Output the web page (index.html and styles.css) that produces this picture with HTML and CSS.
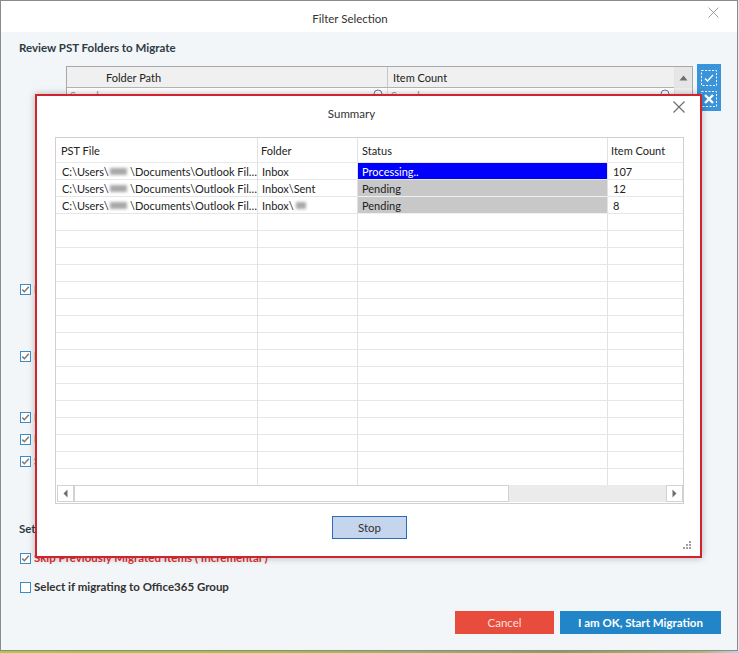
FILE: index.html
```html
<!DOCTYPE html>
<html lang="en">
<head>
<meta charset="utf-8">
<title>Filter Selection</title>
<link rel="stylesheet" href="styles.css">
</head>
<body>
<div class="desk">
  <div class="window">
    <div class="titlebar">
      <span></span>
      <span class="title">Filter Selection</span>
      <svg class="win-close" width="11" height="11" viewBox="0 0 11 11"><path d="M0.5 0.5L10.5 10.5M10.5 0.5L0.5 10.5" stroke="#a0a0a0" stroke-width="1"/></svg>
    </div>
    <div class="main">
      <h2 class="heading">Review PST Folders to Migrate</h2>
      <div class="folders">
        <div class="fgrid">
          <div class="ftable">
            <div class="frow fhead">
              <div class="fcell fc1">Folder Path</div>
              <div class="fcell fc2">Item Count</div>
            </div>
            <div class="frow fsearch">
              <div class="fcell fc1"><span class="ph">Search</span><svg class="mag" width="10" height="10" viewBox="0 0 10 10"><circle cx="5" cy="5" r="4" fill="none" stroke="#5b7ea6" stroke-width="1"/></svg></div>
              <div class="fcell fc2"><span class="ph">Search</span><svg class="mag" width="10" height="10" viewBox="0 0 10 10"><circle cx="5" cy="5" r="4" fill="none" stroke="#5b7ea6" stroke-width="1"/></svg></div>
            </div>
          </div>
          <div class="vscroll">
            <div class="vbtn"><svg width="9" height="6" viewBox="0 0 9 6"><path d="M4.5 0.5L8.5 5.5H0.5Z" fill="#6e6e6e"/></svg></div>
          </div>
        </div>
        <div class="side-btns">
          <div class="side-btn"><svg width="16" height="16" viewBox="0 0 16 16"><rect x="0.5" y="0.5" width="15" height="15" fill="none" stroke="#fff" stroke-dasharray="2 1.5"/><path d="M4 8.5L6.5 11L12 5" fill="none" stroke="#fff" stroke-width="1.3"/></svg></div>
          <div class="side-btn"><svg width="16" height="16" viewBox="0 0 16 16"><rect x="0.5" y="0.5" width="15" height="15" fill="none" stroke="#fff" stroke-dasharray="2 1.5"/><path d="M4 4L12 12M12 4L4 12" fill="none" stroke="#fff" stroke-width="2.4"/></svg></div>
        </div>
      </div>
      <div class="filters">
        <div class="opt opt-1"><span class="cb"><svg width="9" height="9" viewBox="0 0 9 9"><path d="M1.3 4.6L3.4 6.7L7.8 1.8" fill="none" stroke="#7a7a7a" stroke-width="1.5"/></svg></span><span class="opt-label">Date Filter</span></div>
        <div class="opt opt-2"><span class="cb"><svg width="9" height="9" viewBox="0 0 9 9"><path d="M1.3 4.6L3.4 6.7L7.8 1.8" fill="none" stroke="#7a7a7a" stroke-width="1.5"/></svg></span><span class="opt-label">Item Type Filter</span></div>
        <div class="opt opt-3"><span class="cb"><svg width="9" height="9" viewBox="0 0 9 9"><path d="M1.3 4.6L3.4 6.7L7.8 1.8" fill="none" stroke="#7a7a7a" stroke-width="1.5"/></svg></span><span class="opt-label">Exclude Deleted Items</span></div>
        <div class="opt opt-4"><span class="cb"><svg width="9" height="9" viewBox="0 0 9 9"><path d="M1.3 4.6L3.4 6.7L7.8 1.8" fill="none" stroke="#7a7a7a" stroke-width="1.5"/></svg></span><span class="opt-label">Exclude Empty Folders</span></div>
        <div class="opt opt-5"><span class="cb"><svg width="9" height="9" viewBox="0 0 9 9"><path d="M1.3 4.6L3.4 6.7L7.8 1.8" fill="none" stroke="#7a7a7a" stroke-width="1.5"/></svg></span><span class="opt-label">Save Folder Structure</span></div>
      </div>
      <h2 class="heading settings-head">Settings</h2>
      <div class="opt opt-skip"><span class="cb"><svg width="9" height="9" viewBox="0 0 9 9"><path d="M1.3 4.6L3.4 6.7L7.8 1.8" fill="none" stroke="#7a7a7a" stroke-width="1.5"/></svg></span><span class="opt-label red">Skip Previously Migrated Items ( Incremental )</span></div>
      <div class="opt opt-group"><span class="cb"></span><span class="opt-label">Select if migrating to Office365 Group</span></div>
      <div class="actions">
        <button class="btn btn-cancel">Cancel</button>
        <button class="btn btn-start">I am OK, Start Migration</button>
      </div>
    </div>
  </div>
  <div class="strip"></div>

  <div class="summary">
    <div class="sum-title">
      <span></span>
      <span class="sum-name">Summary</span>
      <svg class="sum-close" width="12" height="12" viewBox="0 0 12 12"><path d="M0.5 0.5L11.5 11.5M11.5 0.5L0.5 11.5" stroke="#6b6b6b" stroke-width="1.1"/></svg>
    </div>
    <div class="sgrid">
      <div class="stable">
        <div class="sh">PST File</div><div class="sh">Folder</div><div class="sh">Status</div><div class="sh">Item Count</div>

        <div class="sc">C:\Users\<span class="blur"></span>\Documents\Outlook Fil…</div><div class="sc">Inbox</div><div class="sc st-proc">Processing..</div><div class="sc num">107</div>
        <div class="sc">C:\Users\<span class="blur"></span>\Documents\Outlook Fil…</div><div class="sc">Inbox\Sent</div><div class="sc st-pend">Pending</div><div class="sc num">12</div>
        <div class="sc">C:\Users\<span class="blur"></span>\Documents\Outlook Fil…</div><div class="sc">Inbox\<span class="blur short"></span></div><div class="sc st-pend">Pending</div><div class="sc num">8</div>

        <div class="sc"></div><div class="sc"></div><div class="sc"></div><div class="sc"></div>
        <div class="sc"></div><div class="sc"></div><div class="sc"></div><div class="sc"></div>
        <div class="sc"></div><div class="sc"></div><div class="sc"></div><div class="sc"></div>
        <div class="sc"></div><div class="sc"></div><div class="sc"></div><div class="sc"></div>
        <div class="sc"></div><div class="sc"></div><div class="sc"></div><div class="sc"></div>
        <div class="sc"></div><div class="sc"></div><div class="sc"></div><div class="sc"></div>
        <div class="sc"></div><div class="sc"></div><div class="sc"></div><div class="sc"></div>
        <div class="sc"></div><div class="sc"></div><div class="sc"></div><div class="sc"></div>
        <div class="sc"></div><div class="sc"></div><div class="sc"></div><div class="sc"></div>
        <div class="sc"></div><div class="sc"></div><div class="sc"></div><div class="sc"></div>
        <div class="sc"></div><div class="sc"></div><div class="sc"></div><div class="sc"></div>
        <div class="sc"></div><div class="sc"></div><div class="sc"></div><div class="sc"></div>
        <div class="sc"></div><div class="sc"></div><div class="sc"></div><div class="sc"></div>
        <div class="sc"></div><div class="sc"></div><div class="sc"></div><div class="sc"></div>
        <div class="sc"></div><div class="sc"></div><div class="sc"></div><div class="sc"></div>
        <div class="sc"></div><div class="sc"></div><div class="sc"></div><div class="sc"></div>
      </div>
      <div class="hscroll">
        <div class="hbtn"><svg width="5" height="9" viewBox="0 0 5 9"><path d="M4.5 0.5V8.5L0.5 4.5Z" fill="#6e6e6e"/></svg></div>
        <div class="hthumb"></div>
        <div class="htrack"></div>
        <div class="hbtn"><svg width="5" height="9" viewBox="0 0 5 9"><path d="M0.5 0.5V8.5L4.5 4.5Z" fill="#6e6e6e"/></svg></div>
      </div>
    </div>
    <div class="sum-foot">
      <span></span>
      <button class="stop">Stop</button>
      <svg class="grip" width="9" height="8" viewBox="0 0 9 8"><rect x="6" y="0" width="2" height="2" fill="#a0a0a0"/><rect x="3" y="3" width="2" height="2" fill="#a0a0a0"/><rect x="6" y="3" width="2" height="2" fill="#a0a0a0"/><rect x="0" y="6" width="2" height="2" fill="#a0a0a0"/><rect x="3" y="6" width="2" height="2" fill="#a0a0a0"/><rect x="6" y="6" width="2" height="2" fill="#a0a0a0"/></svg>
    </div>
  </div>
</div>
</body>
</html>
```

FILE: styles.css
```css
* { box-sizing: border-box; }
html, body { margin: 0; padding: 0; }
body {
  width: 739px;
  height: 653px;
  overflow: hidden;
  font-family: Lato, "Noto Sans", sans-serif;
  font-size: 11px;
  color: #333;
  background: #e6e9ec;
}
.desk {
  position: relative;
  width: 739px;
  height: 653px;
  display: flex;
  flex-direction: column;
}
.window {
  width: 738px;
  height: 651px;
  border: 1px solid #8b8b8b;
  background: #f3f6f8;
  display: flex;
  flex-direction: column;
}
.strip {
  width: 739px;
  height: 2px;
  background: linear-gradient(90deg, #b3c83a 0, #a8c03b 280px, #9fb45c 400px, #8aa24c 560px, #a7b872 700px, #c5d0e2 739px);
}
.titlebar {
  height: 31px;
  background: #fff;
  display: grid;
  grid-template-columns: 1fr auto 1fr;
  align-items: start;
  padding-top: 11px;
}
.title { font-size: 11.5px; line-height: 14px; color: #333; margin-right: 38px; }
.win-close { justify-self: end; margin-right: 18px; margin-top: -5px; }

.main {
  flex: 1;
  padding: 8px 16px 0 18px;
  display: flex;
  flex-direction: column;
}
.heading {
  margin: 0;
  font-size: 11.5px;
  font-weight: 700;
  line-height: 16px;
  color: #2e3a44;
}
.folders {
  margin-top: 10px;
  margin-left: 47px;
  display: flex;
  align-items: flex-start;
  gap: 4px;
}
.fgrid {
  width: 627px;
  height: 205px;
  border: 1px solid #a8a8a8;
  background: #fff;
  display: flex;
}
.ftable { flex: 1; display: flex; flex-direction: column; }
.frow { display: grid; grid-template-columns: 321px 1fr; }
.fhead { height: 21px; background: #f0f0f0; border-bottom: 1px solid #b5b5b5; }
.fsearch { height: 21px; border-bottom: 1px solid #e0e0e0; }
.fcell { display: flex; align-items: center; }
.fhead .fc1 { padding-left: 39px; border-right: 1px solid #c8c8c8; color: #222; }
.fhead .fc2 { padding-left: 5px; color: #222; }
.fsearch .fcell { justify-content: space-between; align-items: flex-start; padding: 1px 4px 0 3px; }
.fsearch .fc1 { border-right: 1px solid #e0e0e0; }
.ph { color: #999; line-height: 13px; }
.mag { margin-top: 0; }
.vscroll { width: 18px; background: #f0f0f0; border-left: 1px solid #e3e3e3; }
.vbtn { height: 21px; background: #e6e6e6; display: flex; align-items: center; justify-content: center; }
.side-btns {
  margin-top: -2px;
  width: 24px;
  background: #3a94d9;
  display: flex;
  flex-direction: column;
  padding: 3px 0 2px;
}
.side-btn { height: 21px; display: flex; align-items: center; justify-content: center; }

.opt { display: flex; align-items: flex-start; gap: 3px; height: 16px; line-height: 16px; }
.cb {
  width: 11px;
  height: 11px;
  margin: 3px 0 0 1px;
  border: 1px solid #3a8dcd;
  background: #fff;
  display: flex;
  align-items: center;
  justify-content: center;
  flex: none;
}
.opt-label { font-weight: 700; font-size: 11.5px; color: #333; white-space: nowrap; }
.opt-label.red { color: #e0302e; }
.opt-1 { margin-top: 10px; }
.opt-2 { margin-top: 51px; }
.opt-3 { margin-top: 45px; }
.opt-4 { margin-top: 6px; }
.opt-5 { margin-top: 6px; }
.settings-head { margin-top: 52px; }
.opt-skip { margin-top: 13px; }
.opt-group { margin-top: 13px; }
.actions { margin-top: 16px; display: flex; justify-content: flex-end; gap: 6px; }
.btn {
  height: 23px;
  border: 0;
  font-family: inherit;
  font-size: 11.5px;
  padding: 0;
  color: #fff;
}
.btn-cancel { width: 99px; background: #e74c3c; color: #fbe0dc; }
.btn-start { width: 161px; background: #2185c7; font-weight: 700; }

/* summary dialog */
.summary {
  position: absolute;
  left: 35px;
  top: 94px;
  width: 667px;
  height: 464px;
  border: 2px solid #d1232f;
  background: #fff;
  box-shadow: 0 0 7px rgba(0, 0, 0, 0.28);
  display: flex;
  flex-direction: column;
  padding: 0 16px 0 18px;
}
.sum-title {
  height: 41px;
  display: grid;
  grid-template-columns: 1fr auto 1fr;
  align-items: start;
}
.sum-name { margin-top: 11px; margin-right: 36px; line-height: 14px; font-size: 11.5px; color: #333; }
.sum-close { justify-self: end; margin-top: 5px; margin-right: -1px; }
.sgrid {
  height: 367px;
  border: 1px solid #d0d0d0;
  display: flex;
  flex-direction: column;
  flex: none;
}
.stable {
  height: 347px;
  overflow: hidden;
  display: grid;
  grid-template-columns: 202px 100px 250px 1fr;
  grid-template-rows: 25px;
  grid-auto-rows: 17px;
}
.sh, .sc {
  border-right: 1px solid #e2e2e2;
  border-bottom: 1px solid #e6e6e6;
  white-space: nowrap;
  overflow: hidden;
  display: flex;
  align-items: center;
  color: #222;
}
.sh:nth-child(4n), .sc:nth-child(4n) { border-right: 0; }
.sh { padding-left: 5px; border-bottom-color: #e9e9e9; }
.sh:nth-child(2) { padding-left: 3px; }
.sh:nth-child(3) { padding-left: 4px; }
.sh:nth-child(4) { padding-left: 3px; }
.sc { padding-left: 6px; }
.sc:nth-child(4n+2) { padding-left: 4px; }
.sc:nth-child(4n+3) { padding-left: 4px; }
.sc.num { padding-left: 5px; }
.st-proc { background: #0000ff; color: #fff; }
.st-pend { background: #c8c8c8; border-bottom-color: #f0f0f0; }
.blur {
  display: inline-block;
  width: 19px;
  height: 7px;
  margin: 0 3px 0 1px;
  background: #a8a8a8;
  filter: blur(1.6px);
}
.blur.short { width: 10px; margin-left: 2px; }
.hscroll {
  height: 17px;
  margin: 0 0 1px 1px;
  display: flex;
  background: #ebebeb;
}
.hbtn {
  width: 17px;
  height: 17px;
  border: 1px solid #d2d2d2;
  background: #fff;
  display: flex;
  align-items: center;
  justify-content: center;
  flex: none;
}
.hthumb { width: 435px; border: 1px solid #d2d2d2; background: #fff; flex: none; }
.htrack { flex: 1; }
.sum-foot {
  flex: 1;
  display: grid;
  grid-template-columns: 1fr auto 1fr;
}
.stop {
  margin-top: 12px;
  width: 75px;
  height: 23px;
  background: #c4d5ed;
  border: 1px solid #2c6bb6;
  font-family: inherit;
  font-size: 11.5px;
  color: #333;
  padding: 0;
}
.grip { justify-self: end; align-self: end; margin: 0 -8px 7px 0; }
```
